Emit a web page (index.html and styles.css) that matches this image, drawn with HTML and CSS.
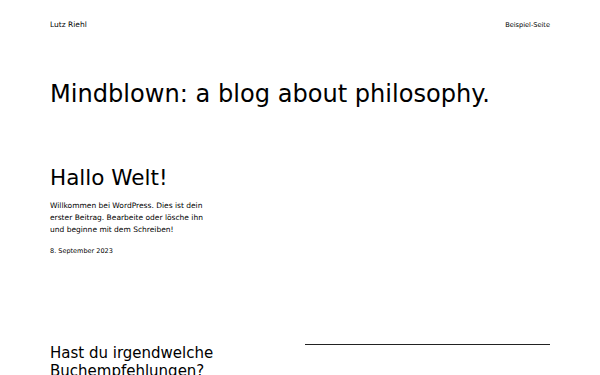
FILE: index.html
```html
<!DOCTYPE html>
<html lang="de">
<head>
<meta charset="utf-8">
<title>Mindblown: a blog about philosophy.</title>
<link rel="stylesheet" href="styles.css">
</head>
<body>
<header class="site-header">
  <a class="site-title" href="#">Lutz Riehl</a>
  <nav class="site-nav"><a href="#">Beispiel-Seite</a></nav>
</header>
<main class="site-main">
  <h1 class="query-title">Mindblown: a blog about philosophy.</h1>
  <div class="post-grid">
    <article class="post">
      <h2 class="post-title">Hallo Welt!</h2>
      <p class="post-excerpt">Willkommen bei WordPress. Dies ist dein erster Beitrag. Bearbeite oder lösche ihn und beginne mit dem Schreiben!</p>
      <div class="post-date">8. September 2023</div>
    </article>
  </div>
  <section class="cta">
    <h2 class="cta-title">Hast du irgendwelche Buchempfehlungen?</h2>
    <div class="cta-side"><hr class="separator"></div>
  </section>
</main>
</body>
</html>
```

FILE: styles.css
```css
html, body {
  margin: 0;
  padding: 0;
  background: #fff;
}
body {
  font-family: "DejaVu Sans", sans-serif;
  color: #000;
}
a {
  color: inherit;
  text-decoration: none;
}
.site-header {
  display: flex;
  justify-content: space-between;
  align-items: center;
  padding: 19px 50px 0;
  font-size: 7.5px;
  line-height: 12px;
}
.site-nav {
  font-size: 6.6px;
}
.site-main {
  padding: 0 50px;
}
.query-title {
  margin: 49px 0 0;
  font-size: 24.1px;
  font-weight: 400;
  line-height: 28.8px;
}
.post-grid {
  display: grid;
  grid-template-columns: repeat(3, 1fr);
  gap: 10px;
  margin-top: 56px;
}
.post-title {
  margin: 0;
  font-size: 21.5px;
  font-weight: 400;
  line-height: 25.8px;
}
.post-excerpt {
  margin: 9.5px 0 0;
  font-size: 7.5px;
  line-height: 11.7px;
}
.post-date {
  margin-top: 11px;
  font-size: 6.5px;
  line-height: 10.4px;
}
.cta {
  display: grid;
  grid-template-columns: 1fr 1fr;
  gap: 10px;
  margin-top: 87px;
}
.cta-title {
  margin: 0;
  font-size: 15px;
  font-weight: 400;
  line-height: 18px;
}
.separator {
  margin: 0;
  border: 0;
  height: 1.2px;
  background: #222;
}
```
